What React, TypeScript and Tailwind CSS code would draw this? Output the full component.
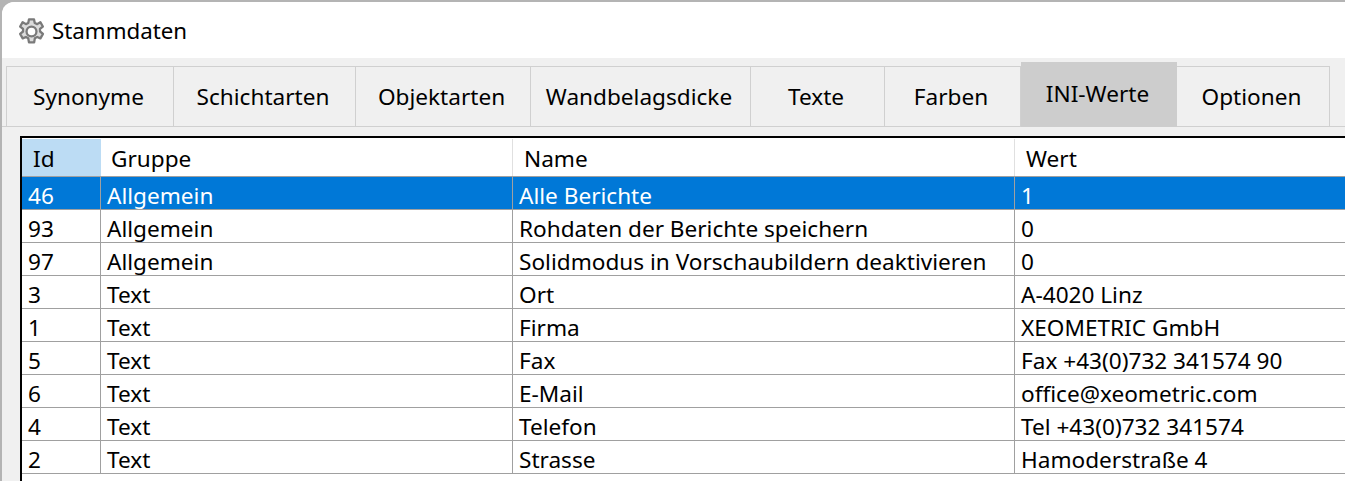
const tabs = [
  { label: "Synonyme", width: "w-[168px]" },
  { label: "Schichtarten", width: "w-[182px]" },
  { label: "Objektarten", width: "w-[175px]" },
  { label: "Wandbelagsdicke", width: "w-[220px]" },
  { label: "Texte", width: "w-[134px]" },
  { label: "Farben", width: "w-[136px]" },
  { label: "INI-Werte", width: "w-[156px]", active: true },
  { label: "Optionen", width: "w-[153px]" },
];

const rows = [
  ["46", "Allgemein", "Alle Berichte", "1"],
  ["93", "Allgemein", "Rohdaten der Berichte speichern", "0"],
  ["97", "Allgemein", "Solidmodus in Vorschaubildern deaktivieren", "0"],
  ["3", "Text", "Ort", "A-4020 Linz"],
  ["1", "Text", "Firma", "XEOMETRIC GmbH"],
  ["5", "Text", "Fax", "Fax +43(0)732 341574 90"],
  ["6", "Text", "E-Mail", "office@xeometric.com"],
  ["4", "Text", "Telefon", "Tel +43(0)732 341574"],
  ["2", "Text", "Strasse", "Hamoderstraße 4"],
];

function GearIcon() {
  return (
    <svg width="29" height="29" viewBox="0 0 24 24" fill="#dcdcdc" stroke="#7a7a7a" strokeWidth="1.9" strokeLinejoin="round">
      <path d="M9.9 2h4.2l.6 3 2 .9 2.6-1.6 2.1 3.6-2.4 2 .1 2.1 2.4 2-2.1 3.7-2.7-1.2-1.9 1-.6 3.5H9.9l-.6-3.4-1.9-1.1-2.7 1.2-2.1-3.7 2.4-2 0-2.1-2.4-2 2.1-3.6 2.7 1.6 1.9-.9z" />
      <circle cx="12" cy="12" r="4.1" fill="#fff" />
    </svg>
  );
}

export default function App() {
  return (
    <div className="h-[481px] w-[1345px] overflow-hidden bg-[#b4b4b4] pl-[2px] pt-[2px] font-['Noto_Sans','Open_Sans',sans-serif] text-[22.6px] text-black">
      <div className="h-full overflow-hidden rounded-tl-[12px] bg-[#f0f0f0]">
        <div className="flex h-[56px] items-center gap-[6px] bg-white pl-[15px] pt-[2px]">
          <GearIcon />
          <span className="text-[22.3px]">Stammdaten</span>
        </div>

        <div className="flex h-[69px] items-end border-b border-[#d0d0d0] pl-[4px]">
          {tabs.map((tab) =>
            tab.active ? (
              <div
                key={tab.label}
                className={`${tab.width} mb-[-1px] flex h-[65px] items-center justify-center bg-[#cdcdcd] pb-[1px] pr-[3px]`}
              >
                {tab.label}
              </div>
            ) : (
              <div
                key={tab.label}
                className={`${tab.width} flex h-[60px] items-center justify-center border-t border-r border-[#d0d0d0] pr-[3px] first:border-l`}
              >
                {tab.label}
              </div>
            ),
          )}
        </div>

        <div className="ml-[18px] mt-[9px] h-full border-t-2 border-l-2 border-black bg-white pt-[1px]">
          <div className="flex h-[38px] items-center border-b border-[#a0a0a0]">
            <div className="flex h-full w-[79px] items-center bg-[#bcdcf4] pl-[11px] pt-[2px]">Id</div>
            <div className="flex h-full w-[412px] items-center border-r border-[#e0e0e0] pl-[10px] pt-[2px]">Gruppe</div>
            <div className="flex h-full w-[502px] items-center border-r border-[#e0e0e0] pl-[11px] pt-[2px]">Name</div>
            <div className="flex h-full flex-1 items-center pl-[11px] pt-[2px]">Wert</div>
          </div>
          {rows.map((row, i) => (
            <div
              key={row[0]}
              className={`flex h-[33px] items-center whitespace-nowrap border-b border-[#a0a0a0] ${
                i === 0 ? "bg-[#0078d7] text-white" : ""
              }`}
            >
              <div className="flex h-full w-[79px] items-center border-r border-[#a0a0a0] pl-[6px] pt-[5px]">{row[0]}</div>
              <div className="flex h-full w-[412px] items-center border-r border-[#a0a0a0] pl-[6px] pt-[5px]">{row[1]}</div>
              <div className="flex h-full w-[502px] items-center border-r border-[#a0a0a0] pl-[6px] pt-[5px]">{row[2]}</div>
              <div className="flex h-full flex-1 items-center pl-[6px] pt-[5px]">{row[3]}</div>
            </div>
          ))}
        </div>
      </div>
    </div>
  );
}
